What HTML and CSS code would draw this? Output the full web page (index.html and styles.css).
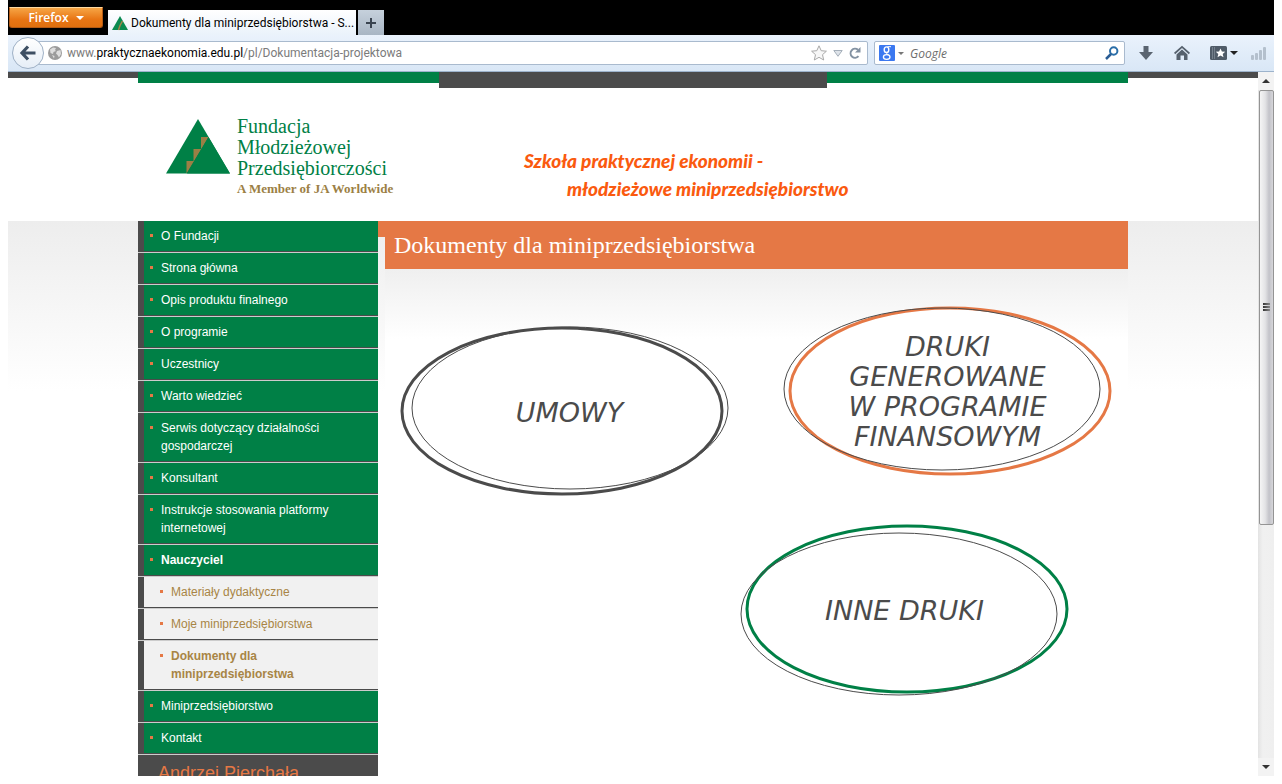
FILE: index.html
```html
<!DOCTYPE html>
<html lang="pl">
<head>
<meta charset="utf-8">
<title>Dokumenty dla miniprzedsiębiorstwa</title>
<link rel="stylesheet" href="styles.css">
</head>
<body>
<div class="browser">
  <div class="titlebar">
    <button class="app-menu" type="button">Firefox <span class="caret caret-light"></span></button>
    <div class="tab">
      <svg class="favicon" viewBox="0 0 16 14" aria-hidden="true"><path d="M8 0 16 14H0z" fill="#0a8a50"/><path d="M10.500 5 8 9.500 6.500 14" fill="none" stroke="#a8834a" stroke-width="1.500"/></svg>
      <span>Dokumenty dla miniprzedsiębiorstwa - S...</span>
    </div>
    <button class="new-tab" type="button" aria-label="Nowa karta"><svg viewBox="0 0 12 12"><path d="M6 1v10M1 6h10" stroke="#3a4450" stroke-width="2"/></svg></button>
  </div>
  <div class="toolbar">
    <button class="back" type="button" aria-label="Wstecz"><svg viewBox="0 0 16 16"><path d="M8 1.500 2 8l6 6.500M2.500 8H15.500" fill="none" stroke="#3d4f63" stroke-width="3.200"/></svg></button>
    <div class="address">
      <svg class="globe" viewBox="0 0 14 14" aria-hidden="true"><circle cx="7" cy="7" r="7" fill="#9b9b9b"/><path d="M2 3.500 5 1.500 8 2 7 4 8 5 5.500 6 5 8 2.500 7zM9 5l3.500-1 .5 4-2 3.500-1.500-2.500-1.500-1.500zM4 9l2.500 1L6 12.500z" fill="#dedede"/></svg>
      <div class="url" role="textbox" aria-label="Adres" contenteditable="true" spellcheck="false">www.<span class="domain">praktycznaekonomia.edu.pl</span>/pl/Dokumentacja-projektowa</div>
      <svg class="star" viewBox="0 0 16 16" aria-hidden="true"><path d="m8 .8 2.200 4.900 5.200.5-3.900 3.500 1.200 5.300L8 12.300 3.300 15l1.200-5.300L.6 6.200l5.200-.5z" fill="#f7f7f7" stroke="#a9a9a9"/></svg>
      <svg class="drop" viewBox="0 0 10 7" aria-hidden="true"><path d="M.8.500h8.400L5 6.300z" fill="#dfe4ea" stroke="#a5afba"/></svg>
      <svg class="reload" viewBox="0 0 12 12" aria-hidden="true"><path d="M9.500 9.200A4.500 4.500 0 1 1 9 2.800" fill="none" stroke="#8392a2" stroke-width="2"/><path d="M11.500 0v5.500H6z" fill="#8392a2"/></svg>
    </div>
    <form class="search">
      <svg class="engine" viewBox="0 0 16 16" aria-hidden="true"><rect width="16" height="16" rx="1" fill="#3b78f0"/><ellipse cx="7.500" cy="4.700" rx="2.300" ry="2.800" fill="none" stroke="#fff" stroke-width="1.400"/><path d="M8.500 1.700H12M9 7.300c-2.500 1-1 1.700 .8 2.700" stroke="#fff" fill="none"/><ellipse cx="7.700" cy="12" rx="3.300" ry="2.300" fill="none" stroke="#fff" stroke-width="1.300"/></svg>
      <span class="caret caret-grey"></span>
      <input type="text" placeholder="Google" aria-label="Szukaj w Google">
      <svg class="lens" viewBox="0 0 14 14" aria-hidden="true"><circle cx="8.700" cy="5" r="3.700" fill="none" stroke="#2a6ea8" stroke-width="2"/><path d="M6 8 1 13" stroke="#2a5c94" stroke-width="2.500"/></svg>
    </form>
    <div class="tools">
      <svg class="i-down" viewBox="0 0 14 14" aria-label="Pobrane"><path d="M4.500 0h5v6H14l-7 8L0 6h4.500z" fill="#5a6470"/></svg>
      <svg class="i-home" viewBox="0 0 16 14" aria-label="Strona startowa"><path d="M.6 7.500 8 .800l7.400 6.700" fill="none" stroke="#56616d" stroke-width="1.700"/><path d="M8 3.500 13.500 8.500V14H10V9.500H6.500V14h-4V8.500z" fill="#56616d"/></svg>
      <span class="i-marks"><svg viewBox="0 0 17 14" aria-label="Zakładki"><rect width="17" height="14" rx="1.500" fill="#4f5b68"/><path d="M2.500 1v12M4.500 1v12" stroke="#74808c"/><path d="m10.500 2.500 1.400 3 3.300.3-2.500 2.200.8 3.300-3-1.800-3 1.800.8-3.300-2.500-2.200 3.300-.3z" fill="#fff"/></svg><span class="caret caret-dark"></span></span>
      <svg class="i-bars" viewBox="0 0 15 15" aria-hidden="true"><g fill="#b4c0cd"><rect y="9" width="3" height="5" rx="1"/><rect x="4" y="7" width="3" height="7" rx="1"/><rect x="8" y="4" width="3" height="10" rx="1"/><rect x="12" y="1" width="3" height="13" rx="1"/></g></svg>
    </div>
  </div>
  <div class="viewport">
    <div class="page">
      <div class="strip"><div class="strip-inner"><span class="strip-green"></span><span class="strip-dark"></span><span class="strip-green"></span></div></div>
      <header class="header">
        <a class="logo" href="#">
          <svg viewBox="0 0 64 55" aria-hidden="true"><path d="M32 0 64 54.500H0z" fill="#008046"/><path d="M42.500 18H35v12h-7.500v12H20.500v12.500z" fill="#9c7f45"/><path d="M42.500 18 21 54.500h43z" fill="#008046"/></svg>
          <span class="logo-text"><span>Fundacja</span><span>Młodzieżowej</span><span>Przedsiębiorczości</span><small>A Member of JA Worldwide</small></span>
        </a>
        <p class="slogan"><span>Szkoła praktycznej ekonomii -</span><span class="slogan-second">młodzieżowe miniprzedsiębiorstwo</span></p>
      </header>
      <div class="backdrop">
        <div class="columns">
          <aside class="sidebar">
            <nav>
              <ul class="menu">
                <li><a href="#">O Fundacji</a></li>
                <li><a href="#">Strona główna</a></li>
                <li><a href="#">Opis produktu finalnego</a></li>
                <li><a href="#">O programie</a></li>
                <li><a href="#">Uczestnicy</a></li>
                <li><a href="#">Warto wiedzieć</a></li>
                <li><a href="#">Serwis dotyczący działalności gospodarczej</a></li>
                <li><a href="#">Konsultant</a></li>
                <li><a href="#">Instrukcje stosowania platformy internetowej</a></li>
                <li><a class="current" href="#">Nauczyciel</a></li>
                <li><a class="sub" href="#">Materiały dydaktyczne</a></li>
                <li><a class="sub" href="#">Moje miniprzedsiębiorstwa</a></li>
                <li><a class="sub current" href="#">Dokumenty dla miniprzedsiębiorstwa</a></li>
                <li><a href="#">Miniprzedsiębiorstwo</a></li>
                <li><a href="#">Kontakt</a></li>
              </ul>
            </nav>
            <div class="user">Andrzej Pierchała</div>
          </aside>
          <main class="main">
            <div class="heading"><span class="step"></span><h1>Dokumenty dla miniprzedsiębiorstwa</h1></div>
            <div class="content">
              <div class="row">
                <a class="oval oval-grey" href="#">
                  <svg viewBox="0 0 329 170" aria-hidden="true"><ellipse class="thick" cx="163" cy="85" rx="160" ry="83"/><ellipse class="thin" cx="171" cy="82" rx="158" ry="81"/></svg>
                  <span>UMOWY</span>
                </a>
                <a class="oval oval-orange" href="#">
                  <svg viewBox="0 0 329 170" aria-hidden="true"><ellipse class="thick" cx="167" cy="85" rx="160" ry="83"/><ellipse class="thin" cx="159" cy="83" rx="158" ry="81"/></svg>
                  <span>DRUKI<br>GENEROWANE<br>W PROGRAMIE<br>FINANSOWYM</span>
                </a>
              </div>
              <div class="row row-last">
                <a class="oval oval-green" href="#">
                  <svg viewBox="0 0 329 172" aria-hidden="true"><ellipse class="thick" cx="167" cy="85" rx="160" ry="83"/><ellipse class="thin" cx="159" cy="90" rx="158" ry="81"/></svg>
                  <span>INNE DRUKI</span>
                </a>
              </div>
            </div>
          </main>
        </div>
      </div>
    </div>
    <div class="scrollbar" aria-hidden="true">
      <span class="arrow arrow-up"></span>
      <span class="thumb"><i></i><i></i><i></i></span>
      <span class="track"></span>
      <span class="arrow arrow-down"></span>
    </div>
  </div>
</div>
</body>
</html>
```
FILE: styles.css
```css
* { box-sizing: border-box; }
body { margin: 0; background: #fff; font-family: "Liberation Sans", Arial, sans-serif; font-size: 12px; color: #4b4b4b; }
a { text-decoration: none; color: inherit; }
button, input { font: inherit; }
svg { display: block; flex: none; overflow: visible; }
.browser { display: flex; flex-direction: column; height: 100vh; padding: 0 8px 8px; overflow: hidden; }

/* window chrome */
.titlebar, .toolbar { font-family: "Open Sans", "Noto Sans", sans-serif; }
.titlebar { display: flex; align-items: flex-end; flex: none; height: 35px; background: #000; }
.app-menu { display: flex; align-items: center; justify-content: center; gap: 7px; align-self: flex-start; width: 94px; height: 21px; margin: 7px 5px 0 1px; padding: 0; border: 1px solid #b45a14; border-top-color: #ffd9a0; border-radius: 0 0 3px 3px; background: linear-gradient(#f6a545, #e87514 60%, #e0700f); color: #fff; font-size: 12px; font-weight: 600; line-height: 16px; }
.caret { display: block; border: 4px solid transparent; border-bottom-width: 0; }
.caret-light { border-top-color: #fff; }
.caret-grey { border-width: 3px; border-bottom-width: 0; border-top-color: #777; }
.caret-dark { border-top-color: #222; }
.tab { display: flex; align-items: center; gap: 3px; width: 248px; height: 25px; padding-left: 4px; background: linear-gradient(#fff, #eaf2fb); color: #000; font-family: Roboto, sans-serif; font-size: 12px; white-space: nowrap; }
.favicon { width: 16px; height: 14px; }
.new-tab { display: flex; align-items: center; justify-content: center; width: 26px; height: 25px; margin-left: 2px; padding: 0; border: 0; background: linear-gradient(#c6d1dc, #a9b6c4); }
.new-tab svg { width: 12px; height: 12px; }
.toolbar { display: flex; align-items: center; flex: none; height: 37px; background: linear-gradient(#eaf2fc, #d9e7f6); border-bottom: 1px solid #9db3cc; }
.back { display: flex; align-items: center; justify-content: center; flex: none; z-index: 1; width: 32px; height: 32px; margin: 0 -10px 0 4px; padding: 0; border: 1px solid #9fb1c6; border-radius: 50%; background: linear-gradient(#fff, #e6eef7); }
.back svg { width: 16px; height: 16px; }
.address, .search { display: flex; align-items: center; height: 24px; border: 1px solid #a9bace; border-radius: 2px; background: #fff; }
.address { flex: 1; padding: 0 6px 0 13px; }
.globe { width: 14px; height: 14px; margin-right: 5px; }
.url { flex: 1; color: #7b7b7b; font-family: Roboto, sans-serif; font-size: 12px; line-height: 16px; white-space: nowrap; outline: 0; }
.domain { color: #000; }
.star { width: 16px; height: 16px; margin-right: 6px; }
.drop { width: 10px; height: 7px; margin-right: 6px; }
.reload { width: 12px; height: 12px; }
.search { width: 251px; margin-left: 6px; padding: 0 5px 0 4px; }
.engine { width: 16px; height: 16px; margin-right: 3px; }
.search input { flex: 1; min-width: 0; margin-left: 6px; padding: 0; border: 0; outline: 0; background: none; font-size: 12px; }
.search input::placeholder { color: #6d6d6d; font-style: italic; opacity: 1; }
.lens { width: 14px; height: 14px; }
.tools { display: flex; align-items: center; width: 149px; padding: 0 8px 0 14px; }
.i-down { width: 14px; height: 14px; }
.i-home { width: 16px; height: 14px; margin: 0 20px 0 21px; }
.i-marks { display: flex; align-items: center; gap: 3px; }
.i-marks svg { width: 17px; height: 14px; }
.i-bars { width: 15px; height: 15px; margin-left: auto; }

/* page */
.viewport { display: flex; flex: 1; min-height: 0; }
.page { flex: 1; min-width: 0; overflow: hidden; background: #fff; }
.strip { height: 6px; background: #4b4b4b; }
.strip-inner { display: flex; align-items: flex-start; width: 990px; margin: 0 auto; }
.strip-green { flex: 1; height: 11px; background: #008046; }
.strip-dark { width: 388px; height: 16px; background: #4b4b4b; }
.header { display: flex; align-items: flex-start; width: 990px; height: 143px; margin: 0 auto; padding: 38px 28px 0; }
.logo { display: flex; gap: 7px; width: 358px; padding-top: 3px; color: #008046; }
.logo svg { width: 64px; height: 55px; }
.logo-text { display: flex; flex-direction: column; margin-top: -3px; font-family: "Liberation Serif", serif; font-size: 20px; line-height: 21px; white-space: nowrap; }
.logo-text small { color: #9c7f45; font-size: 13px; font-weight: 700; line-height: 20px; }
.slogan { display: flex; flex-direction: column; margin: 31px 0 0; color: #fa5a0f; font-family: Lato, sans-serif; font-size: 19px; font-style: italic; font-weight: 900; line-height: 28px; white-space: nowrap; }
.slogan-second { padding-left: 43px; }
.backdrop { background: linear-gradient(#ededed, #fff 170px); }
.columns { display: flex; width: 990px; margin: 0 auto; }
.sidebar { flex: none; width: 240px; }
.menu { margin: 0; padding: 0; list-style: none; }
.menu li { border-bottom: 1px solid #ccc; }
.menu a { display: flex; padding: 6px 24px 6px 6px; border-left: 6px solid #4b4b4b; border-bottom: 1px solid #4b4b4b; background: #008046; color: #fff; line-height: 18px; }
.menu a::before { content: ""; flex: none; width: 3px; height: 3px; margin: 7px 8px 0 0; background: #e57845; }
.menu .sub { padding-left: 16px; background: #f1f1f1; color: #a88545; }
.menu .current { font-weight: 700; }
.user { padding: 6px 20px 20px; background: #4b4b4b; color: #e57845; font-size: 18px; line-height: 24px; }
.main { flex: 1; min-width: 0; }
.heading { display: flex; align-items: flex-start; }
.step { width: 7px; height: 16px; background: #e57845; }
h1 { flex: 1; margin: 0; padding: 0 9px; background: #e57845; color: #fff; font-family: "Liberation Serif", "Times New Roman", serif; font-size: 24px; font-weight: 400; line-height: 48px; }
.content { margin-left: 7px; padding: 37px 16px 60px 14px; background: linear-gradient(#efefef, #fff 70px); }
.row { display: flex; align-items: flex-start; justify-content: space-between; }
.row-last { justify-content: flex-end; padding: 28px 43px 0 0; }
.oval { display: grid; align-items: center; justify-items: center; width: 329px; text-align: center; font-family: "DejaVu Sans", sans-serif; font-size: 27px; font-style: italic; line-height: 30px; }
.oval > * { grid-area: 1 / 1; }
.oval svg { width: 100%; }
.oval span { padding-top: 2px; }
.oval-grey { margin-top: 20px; }
.oval-grey span { padding: 4px 0 0 12px; }
.thick { fill: #fff; stroke: #4b4b4b; stroke-width: 3; }
.thin { fill: none; stroke: #4b4b4b; stroke-width: 1; }
.oval-orange .thick { stroke: #e57845; }
.oval-green .thick { stroke: #008046; }

/* scrollbar */
.scrollbar { display: flex; flex-direction: column; align-items: center; flex: none; width: 16px; background: linear-gradient(90deg, #e3e3e3, #f0f0f0 30%, #efefef); }
.arrow { flex: none; width: 16px; height: 18px; display: flex; align-items: center; justify-content: center; background: #f3f3f3; }
.arrow::before { content: ""; border: 4px solid transparent; }
.arrow-up::before { border-top-width: 0; border-bottom-color: #333; }
.arrow-down::before { border-bottom-width: 0; border-top-color: #333; }
.thumb { display: flex; flex-direction: column; flex: 13; gap: 1px; align-items: center; justify-content: center; width: 15px; border: 1px solid #949494; border-radius: 2px; background: linear-gradient(90deg, #f5f5f5, #e3e3e5 40%, #c3c3c9 70%, #d6d6da); }
.track { flex: 7; }
.thumb i { width: 7px; height: 2px; background: linear-gradient(90deg, #333, #888); }
```
